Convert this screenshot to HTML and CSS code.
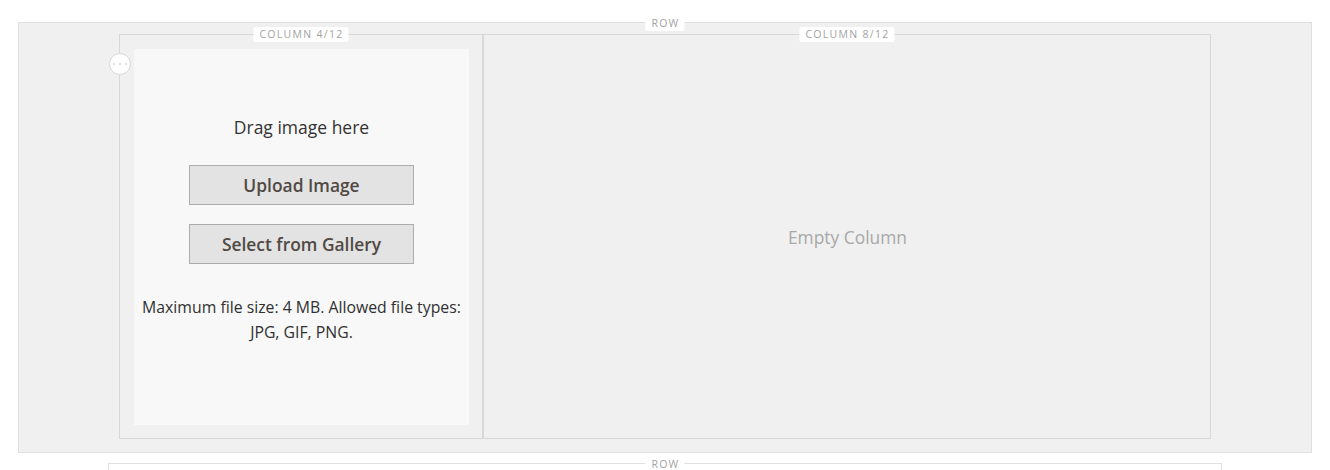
FILE: index.html
```html
<!DOCTYPE html>
<html>
<head>
<meta charset="utf-8">
<link rel="stylesheet" href="styles.css">
</head>
<body>
<div class="stage">
  <div class="row row-main">
    <span class="tag tag-row">ROW</span>
    <div class="columns">
      <div class="column col-4">
        <span class="tag">COLUMN 4/12</span>
        <span class="handle"><i></i><i></i><i></i></span>
        <div class="uploader">
          <p class="drag">Drag image here</p>
          <button class="btn">Upload Image</button>
          <button class="btn">Select from Gallery</button>
          <p class="note">Maximum file size: 4 MB. Allowed file types: JPG, GIF, PNG.</p>
        </div>
      </div>
      <div class="column col-8">
        <span class="tag">COLUMN 8/12</span>
        <div class="empty">Empty Column</div>
      </div>
    </div>
  </div>
  <div class="row row-next">
    <span class="tag tag-row">ROW</span>
  </div>
</div>
</body>
</html>
```
FILE: styles.css
```css
html, body {
  margin: 0;
  padding: 0;
  background: #ffffff;
  font-family: "Open Sans", "Liberation Sans", sans-serif;
  overflow: hidden;
}
.stage {
  padding-top: 22px;
}
.row {
  position: relative;
  box-sizing: border-box;
  border: 1px solid #e0e0e0;
}
.row-main {
  margin-left: 18px;
  width: 1294px;
  height: 431px;
  background: #f0f0f0;
  padding: 11px 100px 0 100px;
}
.row-next {
  margin-left: 108px;
  margin-top: 10px;
  width: 1114px;
  height: 40px;
  background: #ffffff;
}
.tag {
  position: absolute;
  top: -8px;
  left: 50%;
  transform: translateX(-50%);
  background: #ffffff;
  color: #a3a3a3;
  font-size: 10.5px;
  line-height: 15px;
  letter-spacing: 1.3px;
  padding: 0 5px 0 6px;
  border-radius: 2px;
  white-space: nowrap;
}
.tag-row {
  top: -7px;
}
.columns {
  display: flex;
  height: 405px;
}
.column {
  position: relative;
  box-sizing: border-box;
  border: 1px solid #d8d8d8;
  height: 100%;
  padding: 14px 13px 13px 14px;
}
.col-4 {
  width: 364px;
}
.col-8 {
  width: 728px;
  display: flex;
  align-items: center;
  justify-content: center;
}
.handle {
  position: absolute;
  left: -11px;
  top: 18px;
  width: 20px;
  height: 20px;
  border-radius: 50%;
  background: #ffffff;
  border: 1px solid #d8d8d8;
  display: flex;
  align-items: center;
  justify-content: center;
  gap: 4px;
}
.handle i {
  width: 2px;
  height: 2px;
  border-radius: 50%;
  background: #d4d4d4;
}
.uploader {
  height: 100%;
  background: #f8f8f8;
  display: flex;
  flex-direction: column;
  align-items: center;
  padding-top: 66px;
  box-sizing: border-box;
}
.drag {
  margin: 0;
  font-size: 17.5px;
  line-height: 25px;
  color: #333333;
}
.btn {
  font-family: inherit;
  width: 225px;
  height: 40px;
  margin: 0;
  background: #e3e3e3;
  border: 1px solid #adadad;
  color: #514943;
  font-size: 17.4px;
  font-weight: 600;
  padding: 0;
  cursor: pointer;
}
.drag + .btn {
  margin-top: 25px;
}
.btn + .btn {
  margin-top: 19px;
}
.note {
  margin: 31px 0 0;
  width: 330px;
  text-align: center;
  font-size: 15.8px;
  line-height: 25px;
  color: #303030;
}
.empty {
  font-size: 17.4px;
  color: #a8a8a8;
}
```
